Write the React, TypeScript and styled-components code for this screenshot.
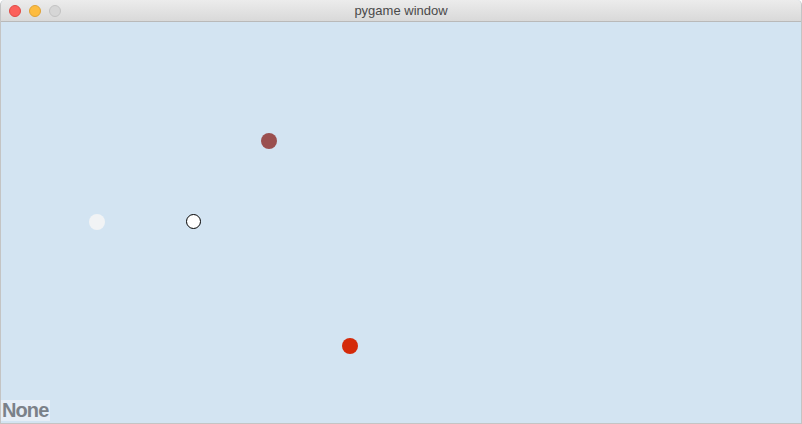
import React from "react";
import styled, { createGlobalStyle } from "styled-components";

const Global = createGlobalStyle`
  html, body { margin: 0; padding: 0; background: #ffffff; }
  #root { width: 802px; height: 424px; }
`;

const Window = styled.div`
  width: 802px;
  height: 424px;
  box-sizing: border-box;
  display: flex;
  flex-direction: column;
  border: 1px solid #c4c4c4;
  border-top: none;
  border-radius: 5px 5px 0 0;
  overflow: hidden;
  background: #d3e4f2;
`;

const TitleBar = styled.div`
  height: 22px;
  flex: 0 0 22px;
  box-sizing: border-box;
  display: flex;
  align-items: center;
  position: relative;
  background: linear-gradient(#ececec, #d9d9d9);
  border-bottom: 1px solid #b9b9b9;
  padding-left: 8px;
  gap: 8px;
`;

const Light = styled.span<{ $c: string; $b: string }>`
  width: 12px;
  height: 12px;
  border-radius: 50%;
  background: ${(p) => p.$c};
  box-sizing: border-box;
  border: 0.5px solid ${(p) => p.$b};
`;

const Title = styled.div`
  position: absolute;
  left: 0;
  right: 0;
  top: 0;
  bottom: 0;
  display: flex;
  align-items: center;
  justify-content: center;
  font-family: "Liberation Sans", Arial, sans-serif;
  font-size: 13px;
  color: #4a4a4a;
  pointer-events: none;
`;

const Canvas = styled.div`
  position: relative;
  flex: 1;
  display: flex;
  align-items: flex-end;
  padding-bottom: 2px;
`;

const Dot = styled.div<{ $c: string; $r: number; $outline?: boolean }>`
  position: absolute;
  width: ${(p) => p.$r * 2}px;
  height: ${(p) => p.$r * 2}px;
  border-radius: 50%;
  background: ${(p) => p.$c};
  box-sizing: border-box;
  border: ${(p) => (p.$outline ? "1px solid #000" : "none")};
`;

const Label = styled.div`
  font-family: "Liberation Sans", Arial, sans-serif;
  font-weight: bold;
  font-size: 20px;
  letter-spacing: -0.9px;
  line-height: 21px;
  color: #7b8189;
  background: #e6eef7;
  padding: 0 2px 0 1px;
`;

const dots = [
  { x: 268.5, y: 141, r: 8, c: "#9a4f4f" },
  { x: 96.5, y: 221.5, r: 8, c: "#f1f3f5" },
  { x: 193, y: 221.5, r: 7.5, c: "#ffffff", o: true },
  { x: 349.5, y: 346, r: 8, c: "#d42a0a" },
];

export default function App() {
  return (
    <>
      <Global />
      <Window>
        <TitleBar>
          <Light $c="#fc605b" $b="#de4a45" />
          <Light $c="#fdbc40" $b="#dea236" />
          <Light $c="#d6d6d6" $b="#c2c2c2" />
          <Title>pygame window</Title>
        </TitleBar>
        <Canvas>
          {dots.map((d, i) => (
            <Dot
              key={i}
              $c={d.c}
              $r={d.r}
              $outline={d.o}
              style={{ left: d.x - d.r - 1, top: d.y - d.r - 22 }}
            />
          ))}
          <Label>None</Label>
        </Canvas>
      </Window>
    </>
  );
}
